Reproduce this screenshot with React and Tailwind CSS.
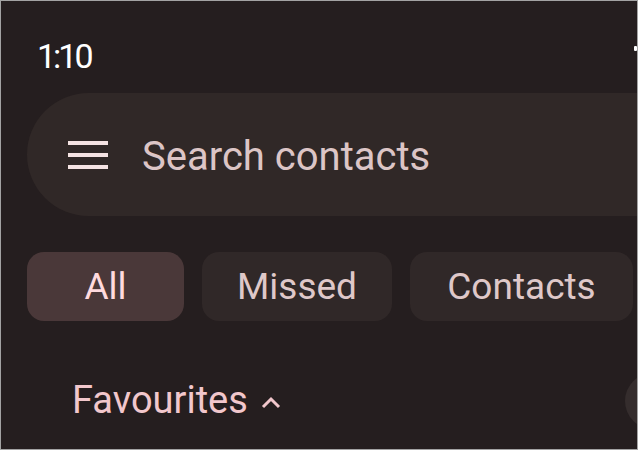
import React from 'react';

function Chip({ label, active, width }) {
  return (
    <div
      className={`h-[69px] shrink-0 rounded-[17px] flex items-center justify-center text-[37px] ${
        active ? 'bg-[#4a3839] text-[#ffdade]' : 'bg-[#302828] text-[#dfc8c9]'
      } ${width}`}
    >
      {label}
    </div>
  );
}

export default function App() {
  return (
    <div
      className="w-[638px] h-[450px] overflow-hidden border border-[#a3a3a3] bg-[#251e1f] flex flex-col items-start"
      style={{ fontFamily: 'Roboto, "Noto Sans", sans-serif' }}
    >
      {/* Status bar */}
      <div className="w-full flex items-start justify-between mt-[38px]">
        <span className="ml-[36px] text-[34px] leading-[34px] tracking-[-3px] text-white">1:10</span>
        <span className="mt-[7px] w-[3px] h-[5px] bg-white rounded-[1px]" />
      </div>

      {/* Search bar */}
      <div className="mt-[20px] ml-[26px] w-[700px] h-[123px] shrink-0 rounded-full bg-[#302827] flex items-center">
        <div className="ml-[41px] flex flex-col gap-[8px]">
          <span className="block w-[40px] h-[4px] bg-[#f5e3e3]" />
          <span className="block w-[40px] h-[4px] bg-[#f5e3e3]" />
          <span className="block w-[40px] h-[4px] bg-[#f5e3e3]" />
        </div>
        <span className="ml-[34px] mt-[4px] text-[40px] text-[#dcc5c6]">Search contacts</span>
      </div>

      {/* Filter chips */}
      <div className="mt-[36px] ml-[26px] flex gap-[18px]">
        <Chip label="All" active width="w-[157px]" />
        <Chip label="Missed" width="w-[190px]" />
        <Chip label="Contacts" width="w-[223px]" />
      </div>

      {/* Favourites */}
      <div className="w-full mt-[51px] flex items-center">
        <span className="ml-[71px] text-[38px] text-[#f2c7cc]">Favourites</span>
        <svg width="22" height="14" viewBox="0 0 22 14" className="ml-[12px] mt-[4px]">
          <path d="M3 11 L11 3 L19 11" fill="none" stroke="#f2c7cc" strokeWidth="3" />
        </svg>
        <div className="ml-auto mr-[-44px] w-[56px] h-[56px] shrink-0 rounded-full bg-[#352d2d]" />
      </div>
    </div>
  );
}
